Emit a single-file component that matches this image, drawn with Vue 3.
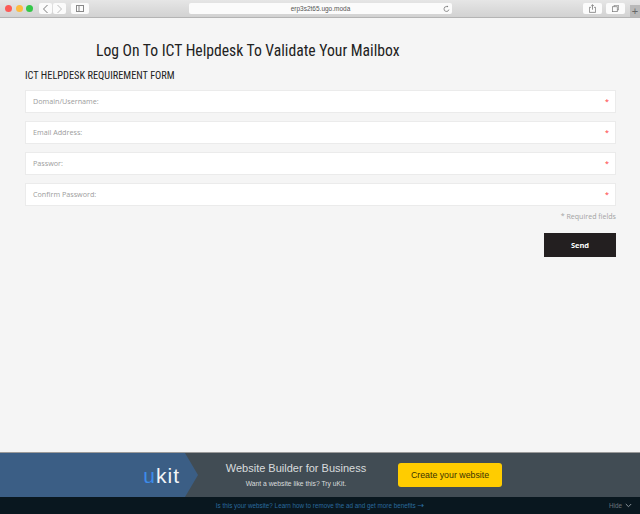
<script setup>
const fields = ['Domain/Username:', 'Email Address:', 'Passwor:', 'Confirm Password:']
</script>

<template>
  <div class="page">
    <header class="toolbar">
      <div class="lights">
        <span class="light red"></span>
        <span class="light yellow"></span>
        <span class="light green"></span>
      </div>
      <div class="nav">
        <span class="tbtn small">
          <svg width="7" height="10" viewBox="0 0 7 10"><path d="M5.5 1 1.5 5l4 4" fill="none" stroke="#7a7a7a" stroke-width="1"/></svg>
        </span>
        <span class="tbtn small">
          <svg width="7" height="10" viewBox="0 0 7 10"><path d="M1.5 1l4 4-4 4" fill="none" stroke="#bdbdbd" stroke-width="1"/></svg>
        </span>
      </div>
      <span class="tbtn side">
        <svg width="8" height="7" viewBox="0 0 8 7"><rect x=".5" y=".5" width="7" height="6" fill="none" stroke="#888"/><path d="M3 .5v6" stroke="#888"/></svg>
      </span>
      <div class="address">
        <span class="url">erp3s2t65.ugo.moda</span>
        <svg class="reload" width="7" height="8" viewBox="0 0 9 9"><path d="M7.6 5.2A3.2 3.2 0 1 1 4.5 1.3h1.4" fill="none" stroke="#777" stroke-width="1"/><path d="M5 0l1.8 1.3L5 2.6z" fill="#777"/></svg>
      </div>
      <span class="tbtn right share">
        <svg width="7" height="9" viewBox="0 0 9 11"><path d="M2.5 4H.5v6.500h8V4h-2M4.500 7V.8M2.800 2.300 4.500.6l1.700 1.700" fill="none" stroke="#777" stroke-width="1"/></svg>
      </span>
      <span class="tbtn right tabs">
        <svg width="7" height="7" viewBox="0 0 10 10"><path d="M3 2.500V.5h6.500v6.500H7.500" fill="none" stroke="#777"/><rect x=".5" y="2.500" width="7" height="7" fill="none" stroke="#777"/></svg>
      </span>
      <span class="plus">+</span>
    </header>

    <main class="content">
      <h1 class="title">Log On To ICT Helpdesk To Validate Your Mailbox</h1>
      <h2 class="subtitle">ICT HELPDESK REQUIREMENT FORM</h2>
      <form class="form">
        <div v-for="f in fields" :key="f" class="field">
          <span class="label">{{ f }}</span>
          <span class="star">*</span>
        </div>
      </form>
      <p class="required">* Required fields</p>
      <div class="actions"><span class="send">Send</span></div>
    </main>

    <footer class="footer">
      <div class="banner">
        <div class="brand"><span class="logo"><span class="u">u</span>kit</span></div>
        <div class="pitch">
          <div class="pitch-title">Website Builder for Business</div>
          <div class="pitch-sub">Want a website like this? Try uKit.</div>
        </div>
        <span class="cta">Create your website</span>
      </div>
      <div class="strip">
        <span class="strip-link">Is this your website? Learn how to remove the ad and get more benefits <span class="arrow">→</span></span>
        <span class="hide">Hide
          <svg width="7" height="5" viewBox="0 0 7 5"><path d="M.8 1l2.700 2.700L6.200 1" fill="none" stroke="#8a949b" stroke-width="1"/></svg>
        </span>
      </div>
    </footer>
  </div>
</template>

<style>
html, body { margin: 0; padding: 0; }
</style>

<style scoped>
.page {
  width: 640px;
  height: 514px;
  display: flex;
  flex-direction: column;
  overflow: hidden;
  background: #f5f5f5;
  font-family: "Open Sans", sans-serif;
}
.toolbar {
  height: 17px;
  flex: none;
  display: flex;
  align-items: center;
  padding-left: 5px;
  background: linear-gradient(#e6e6e6, #d2d2d2);
  border-bottom: 1px solid #b4b4b4;
}
.lights { display: flex; gap: 3.500px; margin-right: 6px; }
.light { width: 7px; height: 7px; border-radius: 50%; }
.red { background: #fc5b57; }
.yellow { background: #fdbc40; }
.green { background: #33c748; }
.nav { display: flex; gap: 1.500px; margin-right: 5.500px; }
.tbtn {
  height: 11px;
  display: flex;
  align-items: center;
  justify-content: center;
  background: #fbfbfb;
  border-radius: 2px;
}
.small { width: 12.500px; }
.side { width: 18px; margin-right: 100px; }
.address {
  width: 263px;
  height: 11px;
  position: relative;
  display: flex;
  align-items: center;
  justify-content: center;
  background: #fbfbfb;
  border-radius: 2px;
  margin-right: 131px;
}
.url { font: 6.500px "Liberation Sans", sans-serif; color: #555; }
.reload { position: absolute; right: 2px; }
.right { width: 19px; }
.share { margin-right: 4px; }
.tabs { margin-right: 5px; }
.plus {
  width: 10px;
  height: 12px;
  align-self: flex-end;
  background: #b9b9b9;
  color: #666;
  font: 11px/12px "Liberation Sans", sans-serif;
  text-align: center;
}
.content {
  flex: 1;
  padding: 0 24px 0 25px;
}
.title {
  margin: 21px 0 0 71px;
  font: 400 15.650px/24px "Roboto", sans-serif;
  font-stretch: 75%;
  color: #222;
  white-space: nowrap;
}
.subtitle {
  margin: 6px 0 0;
  font: 400 10.350px/14px "Roboto", sans-serif;
  font-stretch: 75%;
  color: #222;
  white-space: nowrap;
}
.form {
  margin-top: 7px;
  display: flex;
  flex-direction: column;
  gap: 8px;
}
.field {
  height: 23px;
  box-sizing: border-box;
  display: flex;
  align-items: center;
  justify-content: space-between;
  padding: 0 6px 2px 7px;
  background: #fff;
  border: 1px solid #ebebeb;
  font-size: 7.200px;
  color: #9c9c9c;
}
.star { color: #f33; }
.required {
  margin: 5px 0 0;
  text-align: right;
  font-size: 7.100px;
  line-height: 10px;
  color: #a3a3a3;
}
.actions { margin-top: 12px; display: flex; justify-content: flex-end; }
.send {
  width: 72px;
  height: 24px;
  display: flex;
  align-items: center;
  justify-content: center;
  background: #231f20;
  color: #fff;
  font-size: 7.500px;
  font-weight: 700;
}
.footer { flex: none; }
.banner {
  height: 45px;
  display: flex;
  align-items: center;
  background: #414c54;
  border-top: 1px solid #9a9a9a;
  box-sizing: border-box;
}
.brand {
  width: 198px;
  height: 100%;
  flex: none;
  display: flex;
  align-items: center;
  justify-content: flex-end;
  padding-right: 18px;
  box-sizing: border-box;
  background: #3b5e85;
  clip-path: polygon(0 0, 185px 0, 198px 50%, 185px 100%, 0 100%);
}
.logo {
  font: 400 21px/1 "Liberation Sans", sans-serif;
  letter-spacing: 1px;
  color: #f2f5f8;
}
.u { color: #3d8bea; }
.pitch { width: 196px; margin-right: 4px; text-align: center; color: #d9dcde; }
.pitch-title { font: 11px/14px "Liberation Sans", sans-serif; }
.pitch-sub { margin-top: 4px; font: 6.750px/10px "Liberation Sans", sans-serif; }
.cta {
  width: 104px;
  height: 24px;
  display: flex;
  align-items: center;
  justify-content: center;
  background: #fc0;
  border-radius: 3px;
  color: #3a3300;
  font: 8.800px "Liberation Sans", sans-serif;
}
.strip {
  height: 17px;
  position: relative;
  display: flex;
  align-items: center;
  justify-content: center;
  background: #09171f;
  font: 6.300px "Liberation Sans", sans-serif;
}
.strip-link { color: #2a6a9e; }
.arrow { font: 8px/1 "DejaVu Sans", sans-serif; }
.hide {
  position: absolute;
  right: 8px;
  display: flex;
  align-items: center;
  gap: 3px;
  color: #6c767c;
}
</style>
